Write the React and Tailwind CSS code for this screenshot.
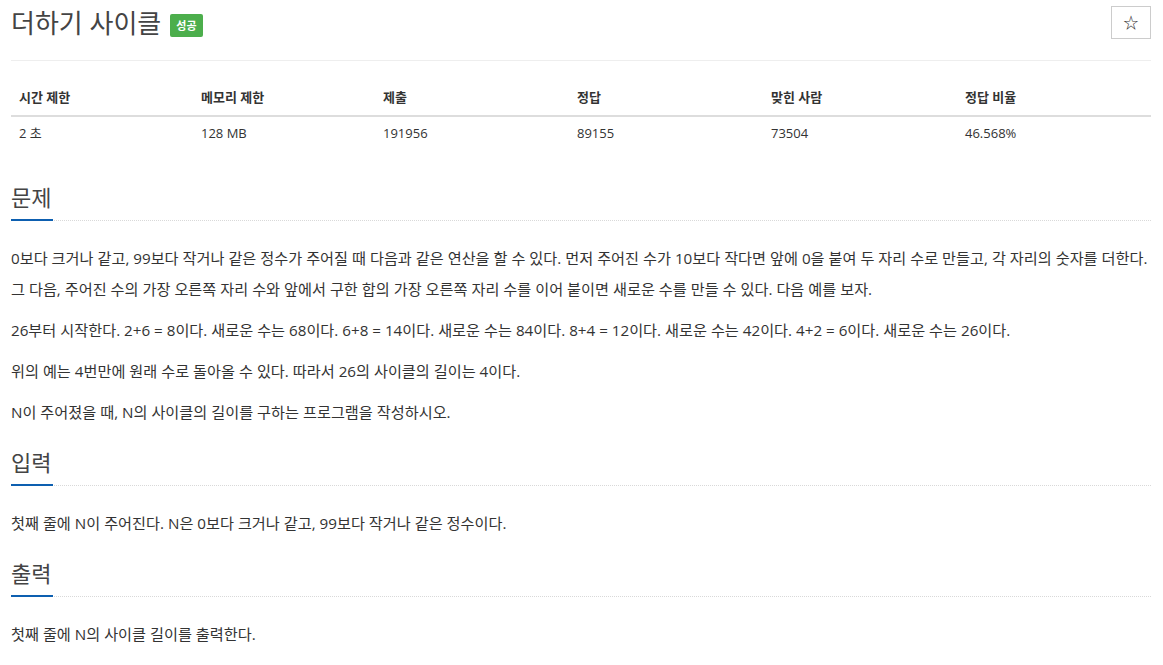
import React from 'react';

const font = { fontFamily: '"Open Sans", "Noto Sans CJK KR", sans-serif' };

const stats = [
  ['시간 제한', '2 초'],
  ['메모리 제한', '128 MB'],
  ['제출', '191956'],
  ['정답', '89155'],
  ['맞힌 사람', '73504'],
  ['정답 비율', '46.568%'],
];

function Headline({ children }) {
  return (
    <div className="border-b border-dotted border-[#d9d9d9]">
      <h2 className="inline-block -mb-px border-b-2 border-[#0d5fb0] pr-[2px] pb-[10px] text-[22px] leading-[24px] font-normal text-[#444]">
        {children}
      </h2>
    </div>
  );
}

function Section({ title, children, first }) {
  return (
    <section className={first ? 'mt-[35px]' : 'mt-[22px]'}>
      <Headline>{title}</Headline>
      <div className="mt-[22px] text-[15.2px] leading-[31px] text-[#333]">{children}</div>
    </section>
  );
}

export default function App() {
  return (
    <div className="min-h-screen bg-white" style={font}>
      <div className="mx-[11px] w-[1140px]">
        <div className="flex items-start justify-between pt-[6px]">
          <div className="flex items-center gap-[9px] pt-[2px]">
            <h1 className="text-[26px] leading-[30px] font-normal text-[#444]">더하기 사이클</h1>
            <span className="mt-[4px] rounded-[2px] bg-[#4cae4c] px-[6px] py-[3px] text-[11px] leading-[17px] font-semibold text-white">
              성공
            </span>
          </div>
          <button className="flex h-[33px] w-[40px] items-center justify-center border border-[#ccc] bg-white text-[15px] text-[#333]">
            ☆
          </button>
        </div>

        <div className="mt-[21px] border-t border-[#eee]" />

        <div className="mt-[19px] grid grid-cols-[182px_182px_194px_194px_194px_194px] text-[13px] text-[#333]">
          {stats.map(([h]) => (
            <div key={h} className="border-b-2 border-[#ddd] px-[8px] py-[8px] leading-[19px] font-bold">
              {h}
            </div>
          ))}
          {stats.map(([h, v]) => (
            <div key={h + 'v'} className="px-[8px] py-[7px] leading-[19px]">
              {v}
            </div>
          ))}
        </div>

        <Section title="문제" first>
          <p className="mb-[10px]">
            0보다 크거나 같고, 99보다 작거나 같은 정수가 주어질 때 다음과 같은 연산을 할 수 있다. 먼저 주어진 수가 10보다 작다면 앞에 0을 붙여 두 자리 수로 만들고, 각 자리의 숫자를 더한다. 그 다음, 주어진 수의 가장 오른쪽 자리 수와 앞에서 구한 합의 가장 오른쪽 자리 수를 이어 붙이면 새로운 수를 만들 수 있다. 다음 예를 보자.
          </p>
          <p className="mb-[10px]">
            26부터 시작한다. 2+6 = 8이다. 새로운 수는 68이다. 6+8 = 14이다. 새로운 수는 84이다. 8+4 = 12이다. 새로운 수는 42이다. 4+2 = 6이다. 새로운 수는 26이다.
          </p>
          <p className="mb-[10px]">위의 예는 4번만에 원래 수로 돌아올 수 있다. 따라서 26의 사이클의 길이는 4이다.</p>
          <p className="mb-[10px]">N이 주어졌을 때, N의 사이클의 길이를 구하는 프로그램을 작성하시오.</p>
        </Section>

        <Section title="입력">
          <p className="mb-[10px]">첫째 줄에 N이 주어진다. N은 0보다 크거나 같고, 99보다 작거나 같은 정수이다.</p>
        </Section>

        <Section title="출력">
          <p className="mb-[10px]">첫째 줄에 N의 사이클 길이를 출력한다.</p>
        </Section>
      </div>
    </div>
  );
}
